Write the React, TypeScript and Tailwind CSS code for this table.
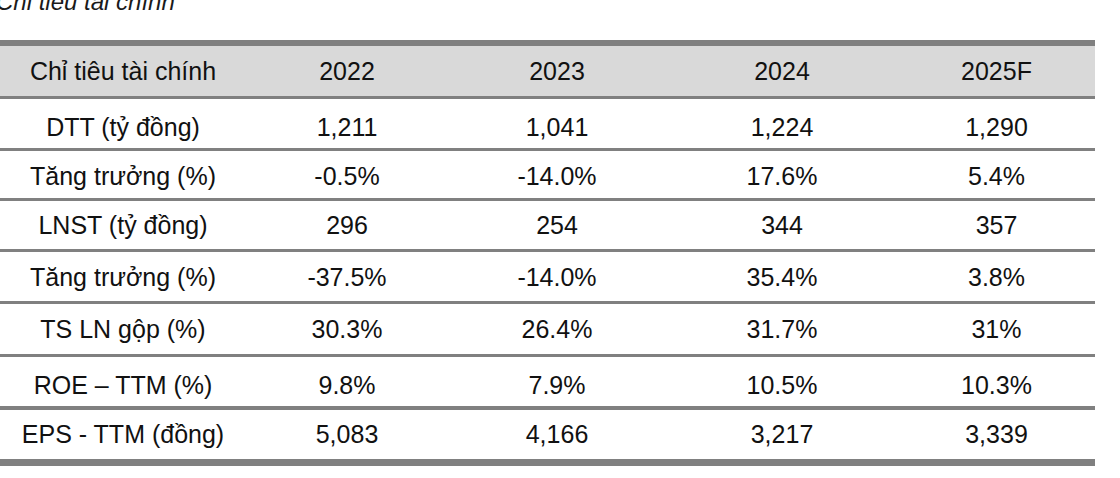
import React from 'react';

type Row = {
  label: string;
  values: string[];
  height: string;
  shift: string;
};

// heights include the bottom rule (border-box)
const rows: Row[] = [
  { label: 'DTT (tỷ đồng)', values: ['1,211', '1,041', '1,224', '1,290'], height: 'h-[52px]', shift: 'pt-[8px]' },
  { label: 'Tăng trưởng (%)', values: ['-0.5%', '-14.0%', '17.6%', '5.4%'], height: 'h-[50px]', shift: 'pt-[4px]' },
  { label: 'LNST (tỷ đồng)', values: ['296', '254', '344', '357'], height: 'h-[51px]', shift: 'pt-0' },
  { label: 'Tăng trưởng (%)', values: ['-37.5%', '-14.0%', '35.4%', '3.8%'], height: 'h-[52px]', shift: 'pt-[2px]' },
  { label: 'TS LN gộp (%)', values: ['30.3%', '26.4%', '31.7%', '31%'], height: 'h-[53px]', shift: 'pt-0' },
  { label: 'ROE – TTM (%)', values: ['9.8%', '7.9%', '10.5%', '10.3%'], height: 'h-[53px]', shift: 'pt-[8px]' },
  { label: 'EPS - TTM (đồng)', values: ['5,083', '4,166', '3,217', '3,339'], height: 'h-[49px]', shift: 'pt-0' },
];

const headers = ['Chỉ tiêu tài chính', '2022', '2023', '2024', '2025F'];

const gridCols = 'grid grid-cols-[246px_202px_218px_232px_197px]';

const App: React.FC = () => {
  return (
    <div className="w-[1120px] h-[478px] overflow-hidden bg-white text-[#111] font-['Liberation_Sans',Arial,sans-serif]">
      <div className="-mt-[10px] -ml-[4px] h-[24px] text-[24px] leading-[24px] italic text-[#1a1a1a]">
        Chỉ tiêu tài chính
      </div>

      <div className="mt-[26px] w-[1095px] border-t-[6px] border-b-[7px] border-[#808080] text-[25px] leading-none">
        <div className={`${gridCols} h-[53px] items-center bg-[#d9d9d9] border-b-[3px] border-[#808080]`}>
          {headers.map((h) => (
            <div key={h} className="text-center">
              {h}
            </div>
          ))}
        </div>

        {rows.map((row, i) => (
          <div
            key={i}
            className={`${gridCols} ${row.height} ${row.shift} items-center ${
              i < rows.length - 1 ? (i === 5 ? 'border-b-[4px]' : 'border-b-[3px]') : ''
            } border-[#808080]`}
          >
            <div className="text-center">{row.label}</div>
            {row.values.map((v, j) => (
              <div key={j} className="text-center">
                {v}
              </div>
            ))}
          </div>
        ))}
      </div>
    </div>
  );
};

export default App;
